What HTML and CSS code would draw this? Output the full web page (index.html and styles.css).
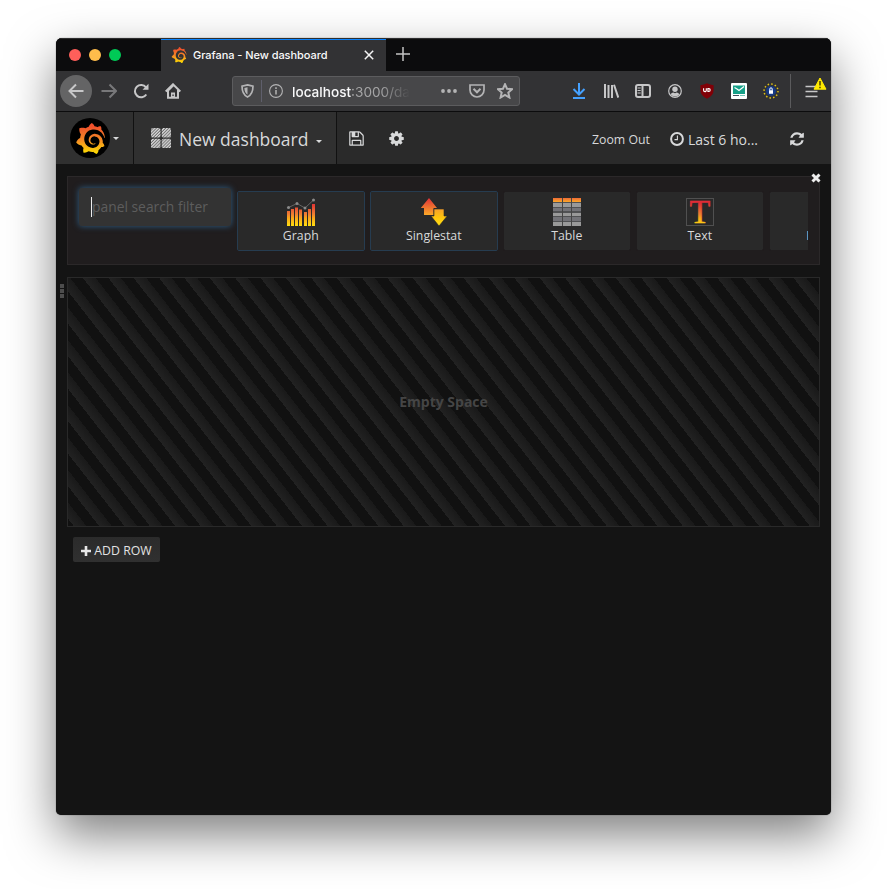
FILE: index.html
```html
<!DOCTYPE html>
<html lang="en">
<head>
<meta charset="utf-8">
<title>Grafana - New dashboard</title>
<link rel="stylesheet" href="styles.css">
</head>
<body>
<svg class="defs" width="0" height="0">
  <defs>
    <linearGradient id="flame" x1="0" y1="0" x2="0" y2="1"><stop offset="0.1" stop-color="#ee4f2c"/><stop offset="0.55" stop-color="#f58a25"/><stop offset="1" stop-color="#fee000"/></linearGradient>
    <linearGradient id="bars" gradientUnits="userSpaceOnUse" x1="0" y1="5" x2="0" y2="28"><stop offset="0" stop-color="#df2c36"/><stop offset="0.5" stop-color="#ef8132"/><stop offset="0.65" stop-color="#f9a61a"/><stop offset="1" stop-color="#ffde10"/></linearGradient>
    <linearGradient id="up" x1="0" y1="0" x2="0" y2="1"><stop offset="0" stop-color="#e03038"/><stop offset="1" stop-color="#fba928"/></linearGradient>
    <linearGradient id="head" x1="0" y1="0" x2="0" y2="1"><stop offset="0" stop-color="#ee6a36"/><stop offset="1" stop-color="#fba928"/></linearGradient>
    <linearGradient id="down" x1="0" y1="0" x2="0" y2="1"><stop offset="0" stop-color="#f6a02a"/><stop offset="0.5" stop-color="#ffc50c"/><stop offset="1" stop-color="#ffe018"/></linearGradient>
    <symbol id="grafana" viewBox="0 0 24 24"><path fill="url(#flame)" d="M23.02 10.59a8.578 8.578 0 0 0-.862-3.034 8.911 8.911 0 0 0-1.789-2.445c.337-1.342-.413-2.505-.413-2.505-1.292-.08-2.113.4-2.416.62-.052-.02-.102-.044-.154-.064-.22-.089-.446-.172-.677-.247-.231-.073-.47-.14-.711-.197a9.867 9.867 0 0 0-.875-.161C14.557.753 12.94 0 12.94 0c-1.804 1.145-2.147 2.744-2.147 2.744l-.018.093c-.098.029-.2.057-.298.088-.138.042-.275.094-.413.143-.138.055-.275.107-.41.166a8.869 8.869 0 0 0-1.557.87l-.063-.029c-2.497-.955-4.716.195-4.716.195-.203 2.658.996 4.33 1.235 4.636a11.608 11.608 0 0 0-.607 2.635C1.636 12.677.953 15.014.953 15.014c1.926 2.214 4.171 2.351 4.171 2.351.003-.002.006-.002.006-.005.285.509.615.994.986 1.446.156.19.32.371.488.548-.704 2.009.099 3.68.099 3.68 2.144.08 3.553-.937 3.849-1.173a9.784 9.784 0 0 0 3.164.501h.08l.055-.003.107-.002.103-.005.003.002c1.01 1.44 2.788 1.646 2.788 1.646 1.264-1.332 1.337-2.653 1.337-2.94v-.058c0-.02-.003-.039-.003-.06.265-.187.52-.387.758-.6a7.875 7.875 0 0 0 1.415-1.7c1.43.083 2.437-.885 2.437-.885-.236-1.49-1.085-2.216-1.264-2.354l-.018-.013-.016-.013a.217.217 0 0 1-.031-.02c.008-.092.016-.18.02-.27.011-.162.016-.323.016-.48v-.253l-.005-.098-.008-.135a1.891 1.891 0 0 0-.01-.13c-.003-.042-.008-.083-.013-.125l-.016-.124-.018-.122a6.215 6.215 0 0 0-2.032-3.73 6.015 6.015 0 0 0-3.222-1.46 6.292 6.292 0 0 0-.85-.048l-.107.002h-.063l-.044.003-.104.008a4.777 4.777 0 0 0-3.335 1.695c-.332.4-.592.84-.768 1.297a4.594 4.594 0 0 0-.312 1.817l.003.091c.005.055.007.11.013.164a3.615 3.615 0 0 0 .698 1.82 3.53 3.53 0 0 0 1.827 1.282c.33.098.66.14.971.137.039 0 .078 0 .114-.002l.063-.003c.02 0 .041-.003.062-.003.034-.002.065-.007.099-.01.007 0 .018-.003.028-.003l.031-.005.06-.008a1.18 1.18 0 0 0 .112-.02c.036-.008.072-.013.109-.024a2.634 2.634 0 0 0 .914-.415c.028-.02.056-.041.085-.065a.248.248 0 0 0 .039-.35.244.244 0 0 0-.309-.06l-.078.042c-.09.044-.184.083-.283.116a2.476 2.476 0 0 1-.475.096c-.028.003-.054.006-.083.006l-.083.002c-.026 0-.054 0-.08-.002l-.102-.006h-.012l-.024.006c-.016-.003-.031-.003-.044-.006-.031-.002-.06-.007-.091-.01a2.59 2.59 0 0 1-.724-.213 2.557 2.557 0 0 1-.667-.438 2.52 2.52 0 0 1-.805-1.475 2.306 2.306 0 0 1-.029-.444l.006-.122v-.023l.002-.031c.003-.021.003-.04.005-.06a3.163 3.163 0 0 1 1.352-2.29 3.12 3.12 0 0 1 .937-.43 2.946 2.946 0 0 1 .776-.101h.06l.07.002.045.003h.026l.07.005a4.041 4.041 0 0 1 1.635.49 3.94 3.94 0 0 1 1.602 1.662 3.77 3.77 0 0 1 .397 1.414l.005.076.003.075c.002.026.002.05.002.075 0 .024.003.052 0 .07v.065l-.002.073-.008.174a6.195 6.195 0 0 1-.08.639 5.1 5.1 0 0 1-.267.927 5.31 5.31 0 0 1-.624 1.13 5.052 5.052 0 0 1-3.237 2.014 4.82 4.82 0 0 1-.649.066l-.039.003h-.287a6.607 6.607 0 0 1-1.716-.265 6.776 6.776 0 0 1-3.4-2.274 6.75 6.75 0 0 1-.746-1.15 6.616 6.616 0 0 1-.714-2.596l-.005-.083-.002-.02v-.056l-.003-.073v-.096l-.003-.104v-.07l.003-.163c.008-.22.026-.45.054-.678a8.707 8.707 0 0 1 .28-1.355c.128-.444.286-.872.473-1.277a7.04 7.04 0 0 1 1.456-2.1 5.925 5.925 0 0 1 .953-.763c.169-.111.343-.213.524-.306.089-.05.182-.091.273-.135.047-.02.093-.042.138-.062a7.177 7.177 0 0 1 .714-.267l.145-.045c.049-.015.098-.026.148-.041.098-.029.197-.052.296-.076.049-.013.1-.02.15-.033l.15-.032.151-.028.076-.013.075-.01.153-.024c.057-.01.114-.013.171-.023l.169-.021c.036-.003.073-.008.106-.01l.073-.008.036-.003.042-.002c.057-.003.114-.008.171-.01l.086-.006h.023l.037-.003.145-.007a7.999 7.999 0 0 1 1.708.125 7.917 7.917 0 0 1 2.048.68 8.253 8.253 0 0 1 1.672 1.09l.09.077.089.078c.06.052.114.107.171.159.057.052.112.106.166.16.052.055.107.107.159.164a8.671 8.671 0 0 1 1.41 1.978c.012.026.028.052.04.078l.04.078.075.156c.023.051.05.1.07.153l.065.15a8.848 8.848 0 0 1 .45 1.34.19.19 0 0 0 .201.142.186.186 0 0 0 .172-.184c.01-.246.002-.532-.024-.856z"/></symbol>
    <pattern id="hatch" width="2.2" height="2.2" patternUnits="userSpaceOnUse" patternTransform="rotate(45)"><rect width="2.2" height="2.2" fill="#707070"/><rect width="1.2" height="2.2" fill="#dadada"/></pattern>
  </defs>
</svg>
<div class="window">
  <header class="tabbar">
    <div class="lights"><i class="red"></i><i class="amber"></i><i class="green"></i></div>
    <div class="tab">
      <svg width="16" height="16"><use href="#grafana"/></svg>
      <span class="tab-title">Grafana - New dashboard</span>
      <svg class="tab-close" width="10" height="10" viewBox="0 0 10 10"><path d="M.8.8 9.2 9.2M9.2.8.8 9.2" stroke="#f4f4f4" stroke-width="1.5"/></svg>
    </div>
    <svg class="new-tab" width="14" height="14" viewBox="0 0 14 14"><path d="M7 0V14M0 7H14" stroke="#c4c4c4" stroke-width="1.5"/></svg>
  </header>

  <div class="toolbar">
    <span class="cell back"><svg width="16" height="16" viewBox="0 0 16 16"><path d="M15.5 8H1.5M8 1.5 1.5 8 8 14.500" class="ln"/></svg></span>
    <span class="cell fwd"><svg width="16" height="16" viewBox="0 0 16 16"><path d="M.5 8H14.500M8.500 1.500 15 8 8.500 14.500" class="ln dim"/></svg></span>
    <span class="cell"><svg width="16" height="16" viewBox="0 0 16 16"><path d="M13.300 11.500A6.200 6.200 0 1 1 13 4.300" class="ln"/><path d="M15.500 .8V6.800H9.500Z" fill="#c7c7c8"/></svg></span>
    <span class="cell"><svg width="16" height="16" viewBox="0 0 16 16"><path d="M.7 8.500 8 1.300 15.300 8.500M3 7V14.800H13V7M3.600 7 8 2.500" class="ln"/><path d="M6 15V9.500H10V15Z" fill="#c7c7c8"/><path d="M7.400 11.500H8.700V13H7.400Z" fill="#323234"/></svg></span>
    <div class="urlbar">
      <svg class="shield" width="13" height="14" viewBox="0 0 13 14"><path d="M6.500 .9 12 2.100C12 7.500 11 11 6.500 13 2 11 1 7.500 1 2.100Z" class="ln s17"/><path d="M6.500 3.300V10.500C4.300 9.300 3.500 7.200 3.400 3.900Z" fill="#b4b4b5"/></svg>
      <span class="url-sep"></span>
      <svg width="14" height="14" viewBox="0 0 14 14"><circle cx="7" cy="7" r="6.400" fill="none" stroke="#b4b4b5" stroke-width="1.100"/><path d="M7 6V10.500M7 3.300V4.900" stroke="#b4b4b5" stroke-width="1.500"/></svg>
      <span class="url"><b>localhost</b>:3000/da</span>
      <svg class="dots" width="16" height="4" viewBox="0 0 16 4"><circle cx="2" cy="2" r="1.900"/><circle cx="8" cy="2" r="1.900"/><circle cx="14" cy="2" r="1.900"/></svg>
      <svg class="pocket" width="16" height="14" viewBox="0 0 16 14"><path d="M1 1H15V6A7 7 0 0 1 1 6Z" class="ln s17"/><path d="M4.500 4.800 8 8.300 11.500 4.800" class="ln"/></svg>
      <svg class="star" width="16" height="16" viewBox="0 0 16 16"><path d="M8 1.200 10 5.700 15 6.200 11.300 9.500 12.400 14.500 8 11.900 3.600 14.500 4.700 9.500 1 6.200 6 5.700Z" class="ln"/></svg>
    </div>
    <div class="extensions">
      <span class="cell"><svg width="14" height="16" viewBox="0 0 14 16"><path d="M7 0V11M1.500 6 7 11.500 12.500 6M1 15H13" fill="none" stroke="#45a1ff" stroke-width="2"/></svg></span>
      <span class="cell"><svg width="16" height="14" viewBox="0 0 16 14"><path d="M2 0V14M5.500 1V14M9 1V14M11 .8 15.300 13.600" class="ln"/></svg></span>
      <span class="cell"><svg width="16" height="14" viewBox="0 0 16 14"><rect x="1" y="1" width="14" height="12" rx="2" class="ln"/><path d="M7.500 1V13" class="ln"/><path d="M2.500 4H5.700M2.500 6.500H5.700M2.500 9H5.700" stroke="#c7c7c8"/></svg></span>
      <span class="cell"><svg width="14" height="14" viewBox="0 0 14 14"><circle cx="7" cy="7" r="6.300" class="ln s12"/><circle cx="7" cy="5.300" r="2.700" fill="#c7c7c8"/><path d="M2.500 10.200Q4 8.500 5.300 8.600L7 9.200 8.700 8.600Q10 8.500 11.500 10.200 9.500 12.400 7 12.400T2.500 10.200Z" fill="#c7c7c8"/></svg></span>
      <span class="cell"><svg width="14" height="16" viewBox="0 0 14 16"><path d="M7 .3Q10 2 13.600 2.200V7Q13.600 12.500 7 15.800 .4 12.500 .4 7V2.200Q4 2 7 .3Z" fill="#800007"/><path d="M3.600 5.200V7.300A1.300 1.300 0 0 0 6.300 7.300V5.200M7.900 5.600H8.800A1.400 1.400 0 0 1 8.800 8.400H7.900Z" fill="none" stroke="#fff" stroke-width="1.100"/></svg></span>
      <span class="cell"><svg width="16" height="16" viewBox="0 0 16 16"><rect width="16" height="16" rx="1" fill="#fff"/><rect x="2" y="2.500" width="12" height="8.500" fill="#17a088"/><path d="M3.500 4.500 6 6 8 7.500 13 3.500" fill="none" stroke="#fff" stroke-width="1.200"/><path d="M2 12.500H8" stroke="#415060"/><path d="M9 12.500H14" stroke="#73c8ba"/></svg></span>
      <span class="cell"><svg width="16" height="16" viewBox="0 0 16 16"><circle cx="8" cy="8" r="5" fill="#153a86"/><circle cx="8" cy="8" r="7" fill="none" stroke="#dfc316" stroke-width="1.500" stroke-dasharray="1.500 2.165"/><path d="M6 7.200H10V10.800H6Z" fill="#fff"/><path d="M6.800 7.500V6A1.200 1.200 0 0 1 9.200 6V7.500" fill="none" stroke="#fff"/></svg></span>
    </div>
    <span class="bar-sep"></span>
    <span class="cell menu"><svg width="20" height="20" viewBox="0 0 20 20"><path d="M1.500 5.500H13.500M1.500 10.500H13.500M1.500 15.500H13.500" class="ln s17"/></svg>
      <svg class="warn" width="14" height="13" viewBox="0 0 14 13"><path d="M7 1 13 12.200H1Z" fill="#ffe900" stroke="#ffe900" stroke-linejoin="round"/><path d="M7 4V8.500M7 9.800V11.300" stroke="#2c2600" stroke-width="1.300"/></svg></span>
  </div>

  <nav class="navbar">
    <div class="brand"><span class="logo"><svg width="31" height="31"><use href="#grafana"/></svg></span><i class="caret"></i></div>
    <div class="title">
      <svg width="20" height="20" viewBox="0 0 20 20" fill="url(#hatch)"><rect width="9.500" height="9.500" rx="1.500"/><rect x="10.700" width="9.300" height="9.500" rx="1.500"/><rect y="10.700" width="9.500" height="9.300" rx="1.500"/><rect x="10.700" y="10.700" width="9.300" height="9.300" rx="1.500"/></svg>
      <span>New dashboard</span><i class="caret"></i>
    </div>
    <svg class="save" width="17" height="17" viewBox="0 0 1792 1792" fill="#d8d9da"><path d="M512 1536h768v-384h-768v384zm896 0h128v-896q0-14-10-38.500t-20-34.500l-281-281q-10-10-34-20t-39-10v416q0 40-28 68t-68 28h-576q-40 0-68-28t-28-68v-416h-128v1280h128v-416q0-40 28-68t68-28h832q40 0 68 28t28 68v416zm-384-928v-320q0-13-9.500-22.500t-22.500-9.500h-192q-13 0-22.500 9.500t-9.500 22.500v320q0 13 9.500 22.500t22.500 9.500h192q13 0 22.500-9.500t9.500-22.500zm640 32v928q0 40-28 68t-68 28h-1344q-40 0-68-28t-28-68v-1344q0-40 28-68t68-28h928q40 0 88 20t76 48l280 280q28 28 48 76t20 88z"/></svg>
    <svg class="cog" width="17" height="17" viewBox="0 0 1792 1792" fill="#d8d9da"><path d="M1152 896q0-106-75-181t-181-75-181 75-75 181 75 181 181 75 181-75 75-181zm512-109v222q0 12-8 23t-20 13l-185 28q-19 54-39 91 35 50 107 138 10 12 10 25t-9 23q-27 37-99 108t-94 71q-12 0-26-9l-138-108q-44 23-91 38-16 136-29 186-7 28-36 28h-222q-14 0-24.500-8.500t-11.500-21.500l-28-184q-49-16-90-37l-141 107q-10 9-25 9-14 0-25-11-126-114-165-168-7-10-7-23 0-12 8-23 15-21 51-66.500t54-70.500q-27-50-41-99l-183-27q-13-2-21-12.500t-8-23.500v-222q0-12 8-23t19-13l186-28q14-46 39-92-40-57-107-138-10-12-10-24 0-10 9-23 26-36 98.500-107.500t94.500-71.500q13 0 26 10l138 107q44-23 91-38 16-136 29-186 7-28 36-28h222q14 0 24.500 8.500t11.500 21.500l28 184q49 16 90 37l142-107q9-9 24-9 13 0 25 10 129 119 165 170 7 8 7 22 0 12-8 23-15 21-51 66.500t-54 70.500q26 50 41 98l183 28q13 2 21 12.500t8 23.500z"/></svg>
    <div class="time">
      <span class="zoom-out">Zoom Out</span>
      <svg class="clock" width="14" height="14" viewBox="0 0 14 14"><circle cx="7" cy="7" r="5.900" fill="none" stroke="#d8d9da" stroke-width="2"/><path d="M7.400 3.500V7.600H4.500" fill="none" stroke="#d8d9da" stroke-width="1.100"/></svg>
      <span class="range">Last 6 ho...</span>
      <svg class="refresh" width="16" height="16" viewBox="0 0 1792 1792" fill="#d8d9da"><path d="M1639 1056q0 5-1 7-64 268-268 434.500t-478 166.500q-146 0-282.500-55t-243.500-157l-129 129q-19 19-45 19t-45-19-19-45v-448q0-26 19-45t45-19h448q26 0 45 19t19 45-19 45l-137 137q71 66 161 102t187 36q134 0 250-65t186-179q11-17 53-117 8-23 30-23h192q13 0 22.500 9.500t9.500 22.500zm25-800v448q0 26-19 45t-45 19h-448q-26 0-45-19t-19-45 19-45l138-138q-148-137-349-137-134 0-250 65t-186 179q-11 17-53 117-8 23-30 23h-199q-13 0-22.500-9.500t-9.500-22.500v-7q65-268 270-434.500t480-166.500q146 0 284 55.500t245 156.500l130-129q19-19 45-19t45 19 19 45z"/></svg>
    </div>
  </nav>

  <main class="page">
    <section class="picker">
      <div class="search"><i class="cursor"></i><span>panel search filter</span></div>
      <div class="cards">
        <div class="card on"><svg width="30" height="28" viewBox="0 0 30 28"><path fill="url(#bars)" d="M1 13H4V28H1ZM5 11H8V28H5ZM9 9.500H12V28H9ZM13 11.500H16V28H13ZM18 14H21V28H18ZM22 11H25V28H22ZM26 6H29V28H26Z"/><path d="M2.500 9.500 11 5.500 19 10 27.500 2" fill="none" stroke="#646464"/><g fill="#8a8a8a"><circle cx="2.500" cy="9.500" r="1.500"/><circle cx="11" cy="5.500" r="1.500"/><circle cx="19" cy="10" r="1.500"/><circle cx="27.500" cy="2" r="1.500"/></g></svg><span>Graph</span></div>
        <div class="card on"><svg width="28" height="28" viewBox="0 0 28 28"><path fill="url(#up)" d="M9 0 17 10H13.500V17H4V10H.8Z"/><path fill="url(#down)" stroke="#292929" stroke-width=".6" d="M14 11H24V18H27.200L19 28 11 18H14Z"/></svg><span>Singlestat</span></div>
        <div class="card"><svg width="28" height="28" viewBox="0 0 28 28"><path fill="#505153" d="M0 4H28V28H0Z"/><path fill="url(#head)" d="M0 0H28V4H0Z"/><path fill="#999" d="M0 5H28V9H0ZM0 15H28V18H0ZM0 24H28V28H0Z"/><path fill="#737378" d="M0 10H28V13H0ZM0 19H28V23H0Z"/><path d="M9.500 0V28M18.500 0V28" stroke="#454545"/></svg><span>Table</span></div>
        <div class="card"><svg width="28" height="28" viewBox="0 0 28 28"><rect x=".5" y=".5" width="27" height="27" fill="none" stroke="#505050"/><text class="glyph" x="14" y="25" text-anchor="middle">T</text></svg><span>Text</span></div>
        <div class="card"><span class="pad"></span><span>Heatmap</span></div>
      </div>
      <svg class="dismiss" width="10" height="10" viewBox="0 0 10 10"><path d="M1.500 1.500 8.500 8.500M8.500 1.500 1.500 8.500" stroke="#eee" stroke-width="3"/></svg>
    </section>
    <section class="row"><span class="grip"><i></i><i></i><i></i></span><b>Empty Space</b></section>
    <button class="add"><svg width="10" height="10" viewBox="0 0 10 10"><path d="M5 0V10M0 5H10" stroke="#e8e8e8" stroke-width="2.600"/></svg>ADD ROW</button>
  </main>
</div>
</body>
</html>
```
FILE: styles.css
```css
* { box-sizing: border-box; }
html, body { margin: 0; height: 100%; }
body { background: #fff; overflow: hidden; padding: 38px 56px 74px; font-family: "Open Sans", sans-serif; color: #d8d9da; }
.defs { position: absolute; }
svg { display: block; flex: none; }
.window { width: 775px; height: 777px; border-radius: 6px 6px 5px 5px; overflow: hidden; background: #141414; box-shadow: 0 0 1px rgba(0,0,0,.75), 0 20px 48px rgba(0,0,0,.5); }
.ln { fill: none; stroke: #c7c7c8; stroke-width: 2; }
.dim { stroke: #78787a; }
.s17 { stroke-width: 1.7; }
.s12 { stroke-width: 1.2; }

.tabbar { height: 33px; background: #0c0c0d; display: flex; align-items: center; border-top: 1px solid #2d2d2e; font-family: Inter, sans-serif; }
.lights { width: 105px; display: flex; gap: 8px; padding-left: 13px; }
.lights i { width: 12px; height: 12px; border-radius: 50%; }
.red { background: #ff5f5a; }
.amber { background: #ffbd4b; }
.green { background: #00ca56; }
.tab { width: 225px; height: 100%; background: #323234; border-top: 1px solid #0a84ff; display: flex; align-items: center; padding: 0 12px 2px 10px; }
.tab-title { margin-left: 6px; font-size: 11px; font-weight: 500; color: #f9f9fa; letter-spacing: -.05px; white-space: nowrap; }
.tab-close { margin-left: auto; }
.new-tab { margin: 0 0 2px 10px; }

.toolbar { height: 41px; background: #323234; border-bottom: 1px solid #0c0c0d; display: flex; align-items: center; padding-left: 4px; }
.cell { width: 32px; height: 32px; display: flex; align-items: center; justify-content: center; flex: none; }
.back { border-radius: 50%; background: #646465; margin-right: 1px; }
.urlbar { margin-left: 43px; width: 288px; height: 30px; flex: none; background: #474749; border: 1px solid #5c5c5e; border-radius: 3px; display: flex; align-items: center; padding-left: 8px; }
.url-sep { width: 1px; height: 22px; background: #5f5f6c; margin: 0 7px 0 7px; }
.urlbar .ln { stroke: #b4b4b5; }
.dots { fill: #b4b4b5; margin-left: 31px; }
.pocket { margin-left: 12px; }
.star { margin-left: 12px; }
.url { margin-left: 9px; width: 118px; white-space: nowrap; font: 13.6px/20px Inter, sans-serif; padding-top: 1px; color: #a5a5a6; -webkit-mask-image: linear-gradient(90deg, #000 75%, transparent 100%); mask-image: linear-gradient(90deg, #000 75%, transparent 100%); }
.url b { font-weight: 500; color: #f9f9fa; }
.extensions { display: flex; margin-left: 43px; }
.bar-sep { width: 1px; height: 34px; background: #5b5b5d; margin: 0 7px 0 3px; }
.menu { position: relative; }
.warn { position: absolute; right: 3px; top: 2px; }

.navbar { height: 52px; display: flex; align-items: center; background: #2a2a2a; }
.brand, .title { height: 100%; display: flex; align-items: center; background: #303030; border-right: 1px solid #111; }
.brand { width: 78px; padding-left: 14px; }
.logo { width: 40px; height: 40px; border-radius: 50%; background: #000; display: flex; align-items: center; justify-content: center; }
.caret { border: 3px solid transparent; border-top-color: #d8d9da; border-bottom: 0; }
.brand .caret { margin-left: 3px; margin-top: 1px; }
.title { width: 203px; padding-left: 17px; font-size: 17.5px; }
.title span { margin-left: 8px; padding-top: 2px; white-space: nowrap; }
.title .caret { margin: 6px 0 0 8px; }
.save { margin-left: 11px; }
.cog { margin: 1px 0 0 23px; }
.time { margin-left: auto; display: flex; align-items: center; padding-right: 26px; white-space: nowrap; }
.clock, .refresh { margin-top: 1px; }
.zoom-out { margin-right: 20px; padding-top: 2px; font-size: 12.3px; }
.range { margin: 0 31px 0 4px; padding-top: 2px; font-size: 14px; }

.page { padding: 12px 11px 0; }
.picker { position: relative; height: 89px; border: 1px solid #2b2829; background: #201d1e; display: flex; padding: 10px 11px; }
.search { position: relative; width: 152px; height: 38px; margin-top: 1px; background: #333; border-radius: 3px; box-shadow: 0 0 6px #2e5f87; color: #5d5d5d; font-size: 13.85px; line-height: 37px; padding-left: 13px; white-space: nowrap; }
.cursor { position: absolute; left: 12px; top: 9px; width: 1px; height: 20px; background: #eee; }
.cards { display: flex; gap: 5px; margin: 4px 0 0 6px; width: 572px; overflow: hidden; }
.card { width: 128px; height: 60px; flex: none; border: 1px solid #201d1e; background: #292929; background-clip: padding-box; border-radius: 2px; display: flex; flex-direction: column; align-items: center; padding-top: 6px; font-size: 12.3px; line-height: 18px; color: #d8d9da; }
.card.on { border-color: #263c50; }
.card > svg + span { padding-top: 1px; }
.glyph { font: 34px "Liberation Serif", serif; fill: url(#bars); stroke: url(#bars); stroke-width: .5px; }
.pad { height: 29px; }
.dismiss { position: absolute; right: -2px; top: -4px; }
.row { position: relative; height: 250px; margin-top: 12px; border: 1px solid #292929; background: repeating-linear-gradient(-128deg, #111, #111 10px, #191919 10px, #222 20px); display: flex; align-items: center; justify-content: center; padding-bottom: 2px; color: #454545; font-size: 14px; }
.grip { position: absolute; left: -8px; top: 6px; display: grid; gap: 1px; }
.grip i { width: 4px; height: 4px; background: #4d4d4d; }
.add { margin: 10px 0 0 6px; width: 87px; height: 25px; border: 0; border-radius: 2px; background: linear-gradient(#2b2b2b, #303030); color: #e3e3e3; font: 12.3px "Open Sans", sans-serif; display: flex; align-items: center; justify-content: center; gap: 3px; padding: 2px 0 0; white-space: nowrap; }
```
